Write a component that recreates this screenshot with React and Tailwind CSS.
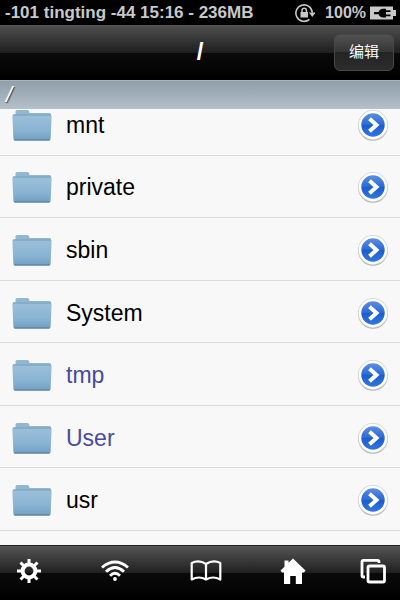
const folders = [
  { name: 'mnt' },
  { name: 'private' },
  { name: 'sbin' },
  { name: 'System' },
  { name: 'tmp', link: true },
  { name: 'User', link: true },
  { name: 'usr' },
];

const FolderIcon = () => (
  <svg className="h-8 w-10 shrink-0" viewBox="0 0 40 32" aria-hidden="true">
    <defs>
      <linearGradient id="folderFront" x1="0" y1="0" x2="0" y2="1">
        <stop offset="0" stopColor="#9cc0da" />
        <stop offset="0.6" stopColor="#8ab4d3" />
        <stop offset="1" stopColor="#709fc4" />
      </linearGradient>
    </defs>
    <path d="M3.5 6V2.5Q3.5 1 5 1H15.5Q17 1 17.2 2.500L17.500 4H37.500Q39 4 39 5.500V8H1V6Z" fill="#94b7cf" />
    <path d="M1.5 5.500H38.500Q39.700 5.500 39.600 7.500L38.600 30Q38.500 31.500 37 31.500H3Q1.500 31.500 1.400 30L0.400 7.500Q0.300 5.500 1.500 5.500Z" fill="url(#folderFront)" />
    <path d="M1 6H39" stroke="#739cb9" strokeWidth="1" />
    <path d="M2.500 31H37.500" stroke="#56758c" strokeWidth="1" />
  </svg>
);

const DisclosureIcon = () => (
  <svg className="h-8 w-8" viewBox="0 0 32 32" aria-hidden="true">
    <defs>
      <linearGradient id="disclosureFill" x1="0" y1="0" x2="0" y2="1">
        <stop offset="0" stopColor="#5b8fe2" />
        <stop offset="0.500" stopColor="#2a69d4" />
        <stop offset="0.500" stopColor="#1c5bcd" />
        <stop offset="1" stopColor="#2f78e2" />
      </linearGradient>
    </defs>
    <circle cx="16" cy="17" r="14.800" fill="#b4b4b4" />
    <circle cx="16" cy="16" r="15" fill="#d4d4d4" />
    <circle cx="16" cy="16" r="14.200" fill="#fff" />
    <circle cx="16" cy="16" r="11.700" fill="url(#disclosureFill)" />
    <path d="M12.500 9.700L19.500 16L12.500 22.300" fill="none" stroke="#fff" strokeWidth="4" />
  </svg>
);

const LockIcon = () => (
  <svg className="h-5 w-5" viewBox="0 0 20 20" fill="none" stroke="#c8c8c8" aria-label="Rotation locked">
    <path d="M14.500 16.300A8.200 8.200 0 1 1 17.300 9.500" strokeWidth="1.600" />
    <path d="M14 9.500H20.500L17.300 14Z" fill="#c8c8c8" stroke="none" />
    <rect x="5.500" y="9" width="7.500" height="5.500" fill="#c8c8c8" stroke="none" />
    <path d="M7 9.500V7.500a2.200 2.200 0 0 1 4.400 0V9.500" strokeWidth="1.500" />
  </svg>
);

const BatteryIcon = () => (
  <svg className="h-[14px] w-[26px]" viewBox="0 0 26 14" aria-label="Charging">
    <path d="M0 0.500H23V4H26V10H23V13.500H0Z" fill="#c8c8c8" />
    <path d="M4 6H8.500C9.500 4 11 2.800 13 2.800H16V4.300H20.500V6H16V8.500H20.500V10.200H16V11.500H13C11 11.500 9.500 10.300 8.500 8.200H4Z" fill="#050505" />
  </svg>
);

const GearIcon = () => (
  <svg className="h-6 w-6" viewBox="0 0 24 24" fill="none" stroke="#fff" aria-hidden="true">
    <circle cx="12" cy="12" r="6.400" strokeWidth="4" />
    <path
      d="M12 0V5M12 19V24M0 12H5M19 12H24M3.500 3.500L7 7M17 17L20.500 20.500M20.500 3.500L17 7M7 17L3.500 20.500"
      strokeWidth="3"
    />
  </svg>
);

const WifiIcon = () => (
  <svg className="h-6 w-7" viewBox="0 0 28 24" fill="none" stroke="#fff" strokeWidth="2.900" aria-hidden="true">
    <path d="M1 8.500Q14 -2.500 27 8.500" />
    <path d="M5 12.700Q14 4.500 23 12.700" />
    <path d="M9 16.700Q14 12 19 16.700" />
    <circle cx="14" cy="20" r="1.900" fill="#fff" stroke="none" />
  </svg>
);

const BookIcon = () => (
  <svg className="h-6 w-8" viewBox="0 0 32 24" fill="none" stroke="#fff" strokeWidth="2.200" strokeLinejoin="round" aria-hidden="true">
    <path d="M16 5Q9 0.500 1.700 4V20.500Q9 16.500 16 20.500Q23 16.500 30.300 20.500V4Q23 0.500 16 5V20" />
  </svg>
);

const HouseIcon = () => (
  <svg className="h-[26px] w-[26px]" viewBox="0 0 26 26" fill="#fff" aria-hidden="true">
    <path d="M13 0.500L25.500 12.500L24 14.500H22V26H15.800V18H10.200V26H4V14.500H2L0.500 12.500L4.500 8.700V2.500H8.500V4.800Z" />
  </svg>
);

const WindowsIcon = () => (
  <svg className="h-[26px] w-[26px]" viewBox="0 0 26 26" fill="none" stroke="#fff" strokeWidth="2.800" aria-hidden="true">
    <path d="M19 5V4Q19 2.400 17.500 2.400H3.500Q2 2.400 2 4V17.500Q2 19 3.500 19H5" />
    <rect x="8" y="8" width="16.500" height="16" rx="1.500" />
  </svg>
);

const StatusBar = () => (
  <div className="flex h-[25px] items-center justify-between bg-black pr-1 pl-[5px] text-[17px] leading-6 font-bold whitespace-nowrap text-[#c8c8c8]">
    <span>-101 tingting -44 15:16 - 236MB</span>
    <div className="flex items-center">
      <LockIcon />
      <span className="pr-1 pl-[10px] text-base">100%</span>
      <BatteryIcon />
    </div>
  </div>
);

const FolderRow = ({ name, link }) => (
  <li className="flex min-h-[62px] flex-1 items-center border-b border-[#dcdcdc] pt-[2px] pr-[11px] pl-3">
    <FolderIcon />
    <a href={`#${name}`} className={`flex-1 pl-[14px] text-[23px] leading-7 ${link ? 'text-[#484a9c]' : 'text-black'}`}>
      {name}
    </a>
    <button type="button" aria-label={`Open ${name}`}>
      <DisclosureIcon />
    </button>
  </li>
);

const tools = [
  { label: 'Settings', Icon: GearIcon },
  { label: 'Wi-Fi', Icon: WifiIcon },
  { label: 'Bookmarks', Icon: BookIcon },
  { label: 'Home', Icon: HouseIcon },
  { label: 'Windows', Icon: WindowsIcon },
];

function App() {
  return (
    <div className="flex min-h-screen flex-col bg-[#f8f8f8] font-['Liberation_Sans','Noto_Sans_CJK_SC',sans-serif]">
      <StatusBar />

      <header className="grid h-[55px] grid-cols-[1fr_auto_1fr] items-center border-t border-[#555] bg-[linear-gradient(#4e4e4e,#1e1e1e_50%,#0a0a0a_50%,#000)] px-[6px] pb-[2px]">
        <h1 className="col-start-2 text-2xl leading-7 font-bold text-white">/</h1>
        <button
          type="button"
          className="h-[37px] w-[60px] justify-self-end rounded-md border border-[#484848] bg-[linear-gradient(#525252,#343434_50%,#242424_50%,#2c2c2c)] text-[15px] leading-5 text-white"
        >
          编辑
        </button>
      </header>

      <div className="flex h-[29px] items-center border-t border-[#a9b6c0] bg-linear-to-b from-[#8f9fab] to-[#b4c0ca] px-[6px] text-[22px] leading-6 text-white italic text-shadow-[1px_1px_1px_#3c444b]">
        /
      </div>

      {/* the list is scrolled a little, so its first row goes under the path bar */}
      <main className="flex flex-1 flex-col overflow-hidden">
        <ul className="-mt-4 flex flex-1 flex-col pb-[14px]">
          {folders.map((folder) => (
            <FolderRow key={folder.name} {...folder} />
          ))}
        </ul>
      </main>

      <nav className="grid h-[55px] grid-cols-[58fr_114fr_68fr_106fr_54fr] items-center border-t border-[#222] bg-[linear-gradient(#555,#202020_50%,#0a0a0a_50%,#000)]">
        {tools.map(({ label, Icon }) => (
          <button key={label} type="button" aria-label={label} className="flex h-full items-center justify-center pb-1">
            <Icon />
          </button>
        ))}
      </nav>
    </div>
  );
}

export default App;
